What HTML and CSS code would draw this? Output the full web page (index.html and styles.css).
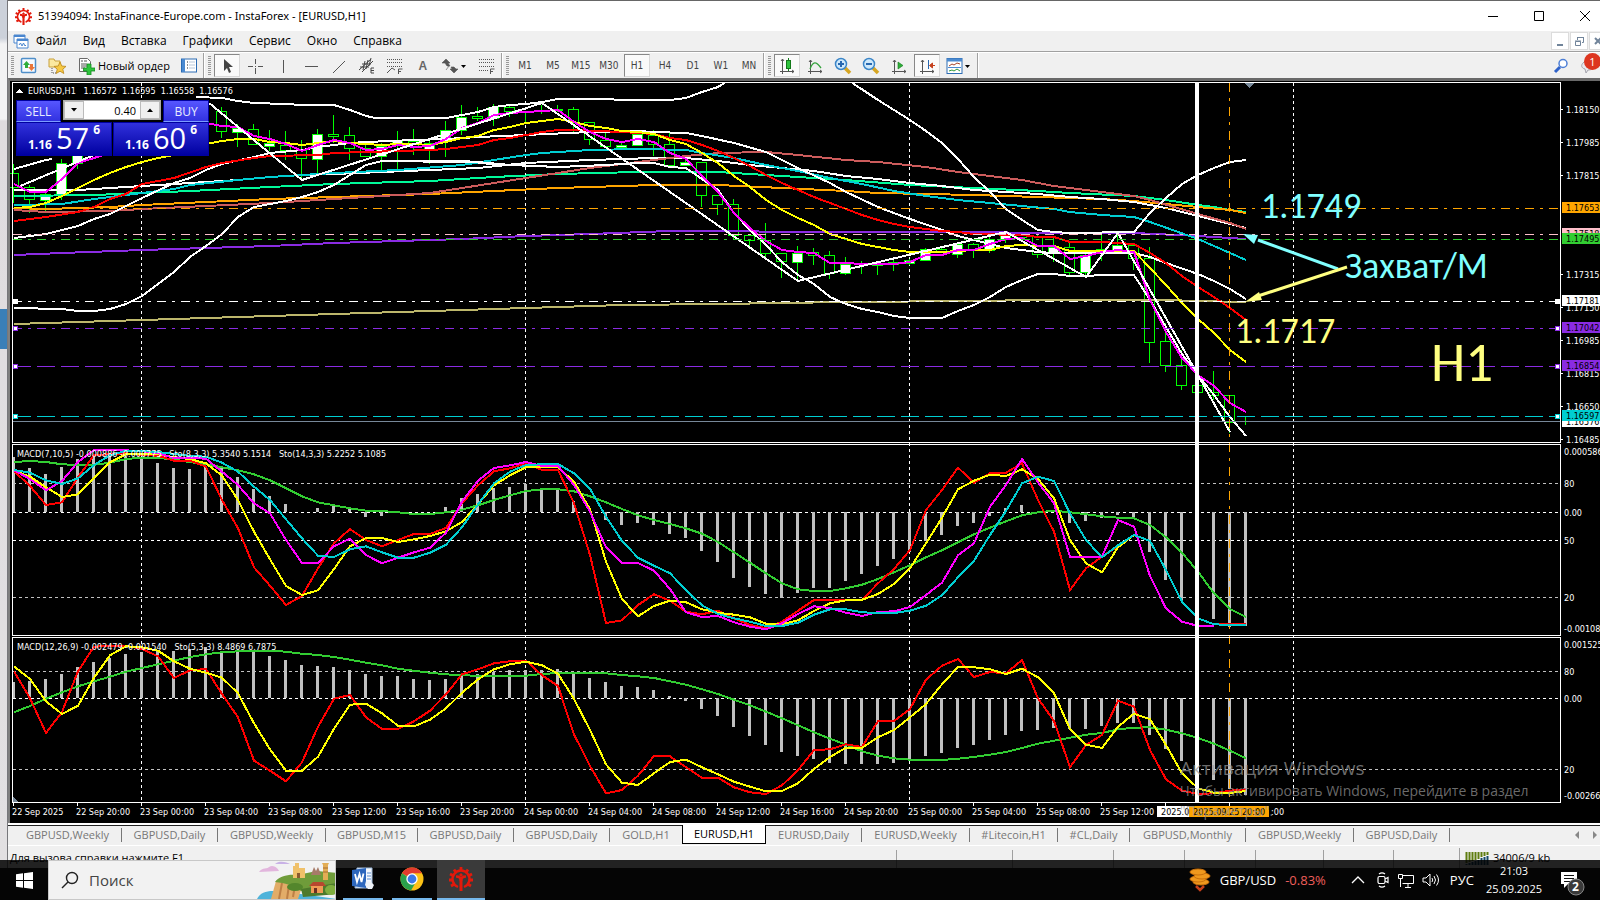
FILE: index.html
```html
<!DOCTYPE html>
<html lang="ru">
<head>
<meta charset="utf-8">
<title>InstaForex - EURUSD,H1</title>
<link rel="stylesheet" href="styles.css">
</head>
<body>
<div class="desktop">
  <div class="behind"><div class="behind-blue"></div></div>
  <main class="app">
    <header class="titlebar">
      <svg class="logo" width="17" height="17" viewBox="0 0 24 24"><use href="#insta"/></svg>
      <h1>51394094: InstaFinance-Europe.com - InstaForex - [EURUSD,H1]</h1>
      <div class="winctl">
        <button aria-label="Свернуть"><svg width="12" height="12"><path d="M1 6.500h10" stroke="#000"/></svg></button>
        <button aria-label="Развернуть"><svg width="12" height="12"><path d="M1.500 1.500h9v9h-9z" stroke="#000" fill="none"/></svg></button>
        <button aria-label="Закрыть"><svg width="12" height="12"><path d="M1 1l10 10M11 1L1 11" stroke="#000"/></svg></button>
      </div>
    </header>
    <nav class="menubar">
      <svg width="16" height="16" viewBox="0 0 16 16"><g fill="#fff" stroke="#4a86cf"><path d="M1 2h11v8H1z"/><path d="M1 3h11" stroke-width="2"/><path d="M4 6h11v9H4z"/><path d="M4 7h11" stroke-width="2"/><path d="M6 12l1.500-2L9 13l1.500-3 1.500 3 1-1" fill="none"/></g></svg>
      <a href="#">Файл</a><a href="#">Вид</a><a href="#">Вставка</a><a href="#">Графики</a><a href="#">Сервис</a><a href="#">Окно</a><a href="#">Справка</a>
      <div class="mdi">
        <button aria-label="Свернуть окно"><svg width="16" height="16"><path d="M5 12h6" stroke="#71849a" stroke-width="2"/></svg></button>
        <button aria-label="Восстановить окно"><svg width="16" height="16" fill="none" stroke="#71849a"><path d="M6.500 7V4.500h6v5H11M6 4.500h7" /><path d="M4.500 8.500h5v4h-5zM4 8h6"/></svg></button>
        <button aria-label="Закрыть окно"><svg width="16" height="16"><path d="M5 5l6 6M11 5l-6 6" stroke="#71849a" stroke-width="2"/></svg></button>
      </div>
    </nav>
    <div class="toolbar">
      <i class="grip"></i>
      <button class="tb first" aria-label="Обзор рынка"><svg width="18" height="18" viewBox="0 0 18 18"><rect x="1.500" y="1.500" width="14" height="14" rx="1" fill="#f5faff" stroke="#4f8fc9" stroke-width="1.500"/><path d="M3 8l3.500-4L10 8H8v3H5V8z" fill="#2fae3b"/><path d="M8 10h2V7h3v3h2l-3.500 4z" fill="#e9763a"/></svg></button>
      <button class="tb" aria-label="Навигатор"><svg width="18" height="18" viewBox="0 0 18 18"><path d="M1 2h5l1 2h5v6H1z" fill="#fbe9a0" stroke="#c9a13c"/><path d="M4 11v5h4" stroke="#555" fill="none" stroke-dasharray="1 1"/><path d="M12 5l1.800 4 4.200.4-3.200 2.800 1 4.300L12 14.200 8.200 16.500l1-4.300L6 9.400l4.200-.4z" fill="#f6c945" stroke="#b98518" stroke-width=".8"/></svg></button>
      <button class="tb order"><svg width="18" height="18" viewBox="0 0 18 18"><path d="M2.500 1.500h8l3 3v10h-11z" fill="#fff" stroke="#6a6a6a"/><path d="M4 4h2M4 7h6M4 9h6M4 11h4M7 4h3" stroke="#555"/><path d="M10 7h4v4h4v3h-4v4h-4v-4H6.500v-3H10z" fill="#2fc33e" stroke="#138a1f" stroke-width=".8"/></svg>Новый ордер</button>
      <button class="tb term" aria-label="Терминал"><svg width="18" height="18" viewBox="0 0 18 18"><rect x="1.500" y="2" width="15" height="13" fill="#fff" stroke="#2c6cb4"/><path d="M2 2h3v13H2z" fill="#4b8ad0"/><path d="M7 5h1M7 8h1M7 11h1" stroke="#222"/><path d="M9 5h6M9 8h6M9 11h6" stroke="#b8c8da"/></svg></button>
      <i class="sep"></i><i class="grip"></i>
      <button class="tb on" aria-label="Курсор"><svg width="18" height="18"><path d="M6 2v12l3-3 2 5 2-1-2-5h4z" fill="#444"/></svg></button>
      <button class="tb" aria-label="Перекрестие"><svg width="18" height="18" stroke="#555"><path d="M9.500 2v5M9.500 11v6M2 9.500h5M12 9.500h5M9 9.500h1"/></svg></button>
      <button class="tb" aria-label="Вертикальная линия"><svg width="18" height="18" stroke="#555"><path d="M9.500 3v13"/></svg></button>
      <button class="tb" aria-label="Горизонтальная линия"><svg width="18" height="18" stroke="#555"><path d="M3 9.500h13"/></svg></button>
      <button class="tb" aria-label="Трендовая линия"><svg width="18" height="18" stroke="#555"><path d="M3 16L15 4"/></svg></button>
      <button class="tb" aria-label="Канал"><svg width="18" height="18" fill="none" stroke="#444"><path d="M1 13L13 2M4 15L15 4M2 10h9M4 7h9M5 13L7 4M8 12l2-9M11 9l2-8"/><path d="M16 11h-3v5h3M13 13.500h3"/></svg></button>
      <button class="tb" aria-label="Фибоначчи"><svg width="18" height="18" fill="none" stroke="#555"><path d="M1 2.500h16M1 5.500h16M1 9.500h16" stroke-dasharray="1 1"/><path d="M1 16l5-5 3 2M12.500 17v-5h4M12 14.500h3"/></svg></button>
      <button class="tb" aria-label="Текст"><b class="glyph">A</b></button>
      <button class="tb drop" aria-label="Стрелки"><svg width="26" height="18" viewBox="0 0 26 18"><path d="M0 6l4-4 4 4H6l2 3H5L3 6zM8 12h2l-1-2h3l2 2h2l-4 4zM7 9l-3 4" fill="#555" stroke="#555" stroke-width=".6"/><path d="M19 8h5l-2.500 3z" fill="#000"/></svg></button>
      <button class="tb" aria-label="Объекты"><svg width="18" height="18" fill="none" stroke="#555"><path d="M1 2.500h15M1 5.500h15M1 9.500h15M1 13.500h9" stroke-dasharray="1 1"/><path d="M12.500 17v-5h4M12 14.500h3"/></svg></button>
      <i class="sep"></i><i class="grip"></i>
      <button class="tb tf">M1</button><button class="tb tf">M5</button><button class="tb tf">M15</button><button class="tb tf">M30</button><button class="tb tf on">H1</button><button class="tb tf">H4</button><button class="tb tf">D1</button><button class="tb tf">W1</button><button class="tb tf">MN</button>
      <i class="sep"></i><i class="grip"></i>
      <button class="tb on" aria-label="Свечи"><svg width="18" height="18"><path d="M4.500 2v15M2 14.500h14M3 4l1.500-2L6 4M14 13l2 1.500-2 1.500" stroke="#555" fill="none"/><path d="M10.500 1v13" stroke="#137a1a"/><rect x="8.500" y="3.500" width="4" height="8" fill="#2fc33e" stroke="#137a1a"/></svg></button>
      <button class="tb" aria-label="Линия"><svg width="18" height="18" fill="none"><path d="M4.500 3v14M2 14.500h14M3 5l1.500-2L6 5M14 13l2 1.500-2 1.500" stroke="#555"/><path d="M4 12c3-8 6-8 11-1" stroke="#33a13b" stroke-width="1.300"/></svg></button>
      <button class="tb" aria-label="Увеличить"><svg width="18" height="18"><path d="M11 11l5 5" stroke="#d6a623" stroke-width="3.500"/><circle cx="7" cy="7" r="5.500" fill="#cfe9fb" stroke="#3c86c8" stroke-width="1.500"/><path d="M4 7h6M7 4v6" stroke="#2868b0" stroke-width="2"/></svg></button>
      <button class="tb" aria-label="Уменьшить"><svg width="18" height="18"><path d="M11 11l5 5" stroke="#d6a623" stroke-width="3.500"/><circle cx="7" cy="7" r="5.500" fill="#cfe9fb" stroke="#3c86c8" stroke-width="1.500"/><path d="M4 7h6" stroke="#2868b0" stroke-width="2"/></svg></button>
      <button class="tb" aria-label="Автопрокрутка"><svg width="18" height="18" fill="none"><path d="M4.500 3v14M2 14.500h14M3 5l1.500-2L6 5M14 13l2 1.500-2 1.500" stroke="#555"/><path d="M8 5v7l5-3.500z" fill="#2fae3b" stroke="#137a1a" stroke-width=".6"/></svg></button>
      <button class="tb on" aria-label="Сдвиг"><svg width="18" height="18" fill="none"><path d="M4.500 3v14M2 14.500h14M3 5l1.500-2L6 5M14 13l2 1.500-2 1.500" stroke="#555"/><path d="M10.500 3v9" stroke="#2868b0"/><path d="M17 8.500h-5M14.500 6l-3 2.500 3 2.500z" fill="#c5401c" stroke="#c5401c"/></svg></button>
      <button class="tb drop" aria-label="Шаблоны"><svg width="26" height="18" viewBox="0 0 26 18"><rect x="1" y="1.500" width="15" height="15" fill="#fff" stroke="#2c6cb4"/><path d="M1 3h15" stroke="#4b8ad0" stroke-width="3"/><path d="M3 9l3-2 2 1 3-2 3 1" stroke="#a5452b" fill="none"/><path d="M2 10.500h13" stroke="#4b8ad0"/><path d="M3 14l3-1 2 1 3-2 3 2" stroke="#2f9a3a" fill="none"/><path d="M19 8h5l-2.500 3z" fill="#000"/></svg></button>
      <i class="sep"></i>
      <div class="tb-right">
        <button class="tb" aria-label="Поиск"><svg width="18" height="18"><path d="M7 10l-5 5" stroke="#2f62c9" stroke-width="3"/><circle cx="10" cy="6.500" r="4" fill="#fff" stroke="#4d7fd6" stroke-width="1.500"/></svg></button>
        <button class="tb chat" aria-label="Сообщения"><svg width="16" height="16"><path d="M3 5c3-4 11-3 12 1s-3 6-7 6l-2 3-1-4C1 10 1 7 3 5z" fill="#e9e9ee" stroke="#a5a5ad"/></svg><span class="badge">1</span></button>
      </div>
    </div>

    <section class="chart">
      <svg id="plot" class="plot" width="100%" height="100%" aria-label="EURUSD,H1"></svg>
      <div class="oneclick">
        <button class="side sell">SELL</button>
        <div class="volume"><button aria-label="Меньше"><svg width="6" height="4"><path d="M0 0h6L3 3.500z"/></svg></button><input aria-label="Объём" value="0.40"><button aria-label="Больше"><svg width="6" height="4"><path d="M0 4h6L3 .5z"/></svg></button></div>
        <button class="side buy">BUY</button>
        <button class="quote"><small>1.16</small><span>57</span><sup>6</sup></button>
        <button class="quote"><small>1.16</small><span>60</span><sup>6</sup></button>
      </div>
      <div class="activation"><p class="act-head">Активация Windows</p><p>Чтобы активировать Windows, перейдите в раздел</p><p>"Параметры".</p></div>
    </section>

    <nav class="tabs">
      <a href="#">GBPUSD,Weekly</a><a href="#">GBPUSD,Daily</a><a href="#">GBPUSD,Weekly</a><a href="#">GBPUSD,M15</a><a href="#">GBPUSD,Daily</a><a href="#">GBPUSD,Daily</a><a href="#" class="plain">GOLD,H1</a><a href="#" class="active">EURUSD,H1</a><a href="#">EURUSD,Daily</a><a href="#">EURUSD,Weekly</a><a href="#">#Litecoin,H1</a><a href="#">#CL,Daily</a><a href="#">GBPUSD,Monthly</a><a href="#">GBPUSD,Weekly</a><a href="#">GBPUSD,Daily</a>
      <div class="tabscroll"><button aria-label="Назад"><svg width="4" height="8"><path d="M4 0v8L0 4z" fill="#888"/></svg></button><button aria-label="Вперёд"><svg width="4" height="8"><path d="M0 0v8l4-4z" fill="#888"/></svg></button></div>
    </nav>
    <div class="statusbar">
      <span class="help">Для вызова справки нажмите F1</span><i></i><i></i><i></i><i></i><i></i><i></i><i></i>
      <span class="traffic"><svg width="24" height="14"><path d="M1.500 1v11M4.500 1v10M7.500 1v9M10.500 1v8M13.500 1v7M16.500 1v5M19.500 1v4M22.500 1v3" stroke="#5f7d10" stroke-width="2"/><path d="M1.500 13v1M4.500 12v2M7.500 11v3M10.500 10v4M13.500 9v5M16.500 7v7M19.500 6v8M22.500 5v9" stroke="#164a68" stroke-width="2"/></svg>34006/9 kb</span>
    </div>
  </main>
  <footer class="taskbar">
    <button class="start" aria-label="Пуск"><svg width="17" height="17" fill="#fff"><path d="M0 2.300l7-1V8H0zM8 1.200L17 0v8H8zM0 9h7v6.700l-7-1zM8 9h9v8l-9-1.200z"/></svg></button>
    <label class="search"><svg width="18" height="18" fill="none" stroke="#222" stroke-width="1.400"><circle cx="11" cy="7" r="5.500"/><path d="M7 11l-6 6"/></svg><input placeholder="Поиск" aria-label="Поиск">
      <svg class="castle" width="78" height="39" viewBox="0 0 78 39"><path d="M2 12c3-5 9-3 10-5 4-3 9 1 10 4z" fill="#e2b6dd"/><path d="M18 4c4-4 12-2 15 0z" fill="#c9b2e6"/><path d="M0 39c4-8 14-9 24-7l20 2 36 5z" fill="#4fb3da"/><path d="M14 39l5-18 8-3 12 0 6 9-4 12z" fill="#e2ac68"/><path d="M22 39l3-16M30 39l2-14M36 37l2-12" stroke="#bd7f45" stroke-width="2"/><path d="M18 22c4-6 14-8 22-7l20-4 20 2v14l-36 4c-8-6-16-8-26-9z" fill="#6f9c3a"/><path d="M44 29l36-6v11l-34 3z" fill="#4d7a2c"/><path d="M36 18V6h2V3h4v5h6v10z" fill="#f0c169"/><path d="M40 18v-5h3v5z" fill="#8a5a30"/><path d="M54 15l3-8 2 4 2-4 3 8z" fill="#a77b68"/><path d="M66 20V5l-1-2h7l-1 2v15z" fill="#e3ad55"/><path d="M66 8h5M66 12h5" stroke="#a86d33"/><path d="M54 25h12v8H54z" fill="#f09a55"/><path d="M52 26l4-4h10l3 4z" fill="#b6482e"/><path d="M57 28h3v5h-3z" fill="#6b2f20"/><ellipse cx="38" cy="27" rx="8" ry="4" fill="#53862c"/><ellipse cx="74" cy="30" rx="6" ry="5" fill="#7fae3e"/></svg></label>
    <button class="task gap" aria-label="Word"><svg width="24" height="24"><path d="M6 1h15v20H4z" fill="#f4f8fd" stroke="#9fbadb"/><path d="M1 3l14-2v20L1 19z" fill="#2d67bd"/><path d="M4 7l2 8 2.500-8 2 8 2-8.500" stroke="#fff" stroke-width="1.800" fill="none"/><path d="M16 6h4M16 9h4M16 12h4" stroke="#5c8ed0"/><path d="M15 14l5 1 3 3-2 4h-4l-3-4z" fill="#eef2f8"/></svg></button>
    <button class="task" aria-label="Chrome"><svg width="24" height="24" viewBox="0 0 24 24"><circle cx="12" cy="12" r="11.500" fill="#fbc116"/><path d="M12 12L2 6.300A11.500 11.500 0 0 1 22 6.300H12z" fill="#e33b2e"/><path d="M2 6.300A11.500 11.500 0 0 0 11 23.500l5-8.700-4-2z" fill="#2aa14c"/><circle cx="12" cy="12" r="5.700" fill="#fff"/><circle cx="12" cy="12" r="4.400" fill="#3b78e7"/></svg></button>
    <button class="task current" aria-label="InstaForex"><svg width="24" height="24" viewBox="0 0 24 24"><g id="insta" fill="none" stroke="#e3190b"><path d="M9 20a8.500 8.500 0 1 1 6 0" stroke-width="2.400"/><path d="M12 0v4M5 2.500l2 3M19 2.500l-2 3M1 7l3 1.500M23 7l-3 1.500M0 13h4M24 13h-4M2 19l3.500-2M22 19l-3.500-2" stroke-width="2.800"/><path d="M12 24V12" stroke-width="3"/><path d="M7 9.500c3 0 5 1.500 5 4.500 0-3 2-4.500 5-4.500" stroke-width="2.600"/><circle cx="12" cy="8" r="1.200" fill="#e3190b"/></g></svg></button>
    <div class="tray">
      <button class="news"><svg width="22" height="24"><g fill="#f0991d" stroke="#c9700c"><ellipse cx="12" cy="14" rx="8" ry="3"/><ellipse cx="9" cy="11" rx="8" ry="3"/><ellipse cx="13" cy="8" rx="8" ry="3"/><ellipse cx="9" cy="4" rx="8" ry="3"/></g><path d="M7 18l4 4 4-4" fill="none" stroke="#c8411a" stroke-width="2.500"/></svg>GBP/USD <em>-0.83%</em></button>
      <button class="chev" aria-label="Скрытые значки"><svg width="14" height="8" fill="none" stroke="#fff" stroke-width="1.300"><path d="M1 7l6-6 6 6"/></svg></button>
      <button aria-label="Камера"><svg width="14" height="16" fill="none" stroke="#fff" stroke-width="1.200"><rect x="2" y="4.500" width="7" height="7" rx="1.500"/><path d="M9 7l3-1.500v5L9 9M3 2c2-1.500 4-1.500 6 0M3 14c2 1.500 4 1.500 6 0"/></svg></button>
      <button aria-label="Сеть"><svg width="18" height="15" fill="none" stroke="#fff"><path d="M5 2.500h11.500v8H5.500M11 11v3M8 14.500h6M1.500 1.500h4v4h-4zM3.500 6v8"/></svg></button>
      <button aria-label="Звук"><svg width="18" height="14" fill="none" stroke="#fff"><path d="M1 5h3l4-4v12L4 9H1z"/><path d="M10 5q1.500 2 0 4M12 3q3 4 0 8M14.500 1.500q4 5.500 0 11"/></svg></button>
      <span class="lang">РУС</span>
      <time class="clock"><span>21:03</span><span>25.09.2025</span></time>
      <button class="notes" aria-label="Уведомления"><svg width="26" height="26"><path d="M2 2h16v12H9l-4 4v-4H2z" fill="#fff"/><path d="M5 5.500h10M5 8.500h10M5 11.500h6" stroke="#111"/><circle cx="17" cy="17" r="8" fill="#3a3a3a" stroke="#888"/></svg><b>2</b></button>
    </div>
  </footer>
</div>
<script src="chart.js"></script>
</body>
</html>
```

FILE: styles.css
```css
* { box-sizing: border-box; }
body { margin: 0; background: #000; font-family: "Open Sans", "Noto Sans", sans-serif; }
button { border: 0; padding: 0; background: none; font: inherit; color: inherit; }
a { color: inherit; text-decoration: none; }
svg { flex: none; }

.desktop { height: 100vh; min-height: 600px; display: grid; grid-template-columns: 8px 1fr; grid-template-rows: 1fr 32px; overflow: hidden; }
.behind { background: linear-gradient(#ccd1da 0, #ccd1da 38px, #f2f2f3 44px, #f2f2f3 119px, #dfdcdf 121px, #e2e0e2); border-right: 1px solid #77777b; padding-top: 309px; }
.behind-blue { height: 40px; background: #3a7fb8; }
.app { display: flex; flex-direction: column; min-width: 0; min-height: 0; background: #f0f0f0; border-top: 1px solid #666; }

.titlebar { height: 30px; flex: none; display: flex; align-items: center; background: #fff; padding-left: 7px; }
.titlebar h1 { margin: 0 0 0 6px; font-size: 11px; font-weight: 400; line-height: 30px; white-space: nowrap; font-family: "Noto Sans", sans-serif; }
.winctl { margin-left: auto; display: flex; padding-right: 8px; gap: 33px; }
.winctl button { width: 13px; height: 12px; display: flex; }

.menubar { height: 21px; flex: none; display: flex; align-items: center; gap: 16px; padding-left: 5px; font-size: 12px; line-height: 18px; border-bottom: 1px solid #a0a0a0; overflow: hidden; white-space: nowrap; }
.menubar > svg + a { margin-left: -9px; }
.mdi { margin-left: auto; display: flex; gap: 1px; margin-right: -7px; }
.mdi button { width: 18px; height: 18px; background: #fff; border: 1px solid #dcdcdc; }
.mdi svg { display: block; }

.toolbar { height: 26px; flex: none; display: flex; align-items: center; background: #f0f0f0; border-top: 1px solid #fff; }
.grip { width: 3px; height: 20px; margin: 0 2px 0 3px; background: repeating-linear-gradient(#999 0 1px, #f0f0f0 1px 2px); }
.sep { width: 2px; height: 26px; background: #a0a0a0; border-right: 1px solid #fff; }
.tb { width: 26px; height: 23px; margin: 0 1px; flex: none; display: inline-flex; align-items: center; justify-content: center; color: #444; }
.tb.on { background: #fafafa; border: 1px solid #d8d8d8; border-top-color: #888; border-left-color: #888; }
.tb.first { margin-left: 0; }
.tb.order { width: auto; margin-left: 6px; gap: 3px; font-size: 11px; color: #000; }
.tb.term { margin: 0 1px 0 5px; }
.tb.drop { width: 34px; }
.tb.tf { font-family: "DejaVu Sans Condensed", "DejaVu Sans", sans-serif; font-stretch: condensed; font-size: 10px; }
.glyph { font: bold 12px "Liberation Sans", sans-serif; color: #666; }
.tb-right { margin-left: auto; display: flex; }
.chat { position: relative; width: 22px; }
.badge { position: absolute; right: -2px; top: -1px; width: 17px; height: 17px; border-radius: 50%; background: #dd3620; color: #fff; font-size: 11px; line-height: 17px; }

.chart { position: relative; flex: 1; min-height: 0; overflow: hidden; background: #000; border-top: 3px solid #696969; border-left: 2px solid #808080; }
.plot { display: block; }
.plot text { font-family: "DejaVu Sans Condensed", "DejaVu Sans", sans-serif; font-stretch: condensed; font-size: 9px; fill: #fff; white-space: pre; }
.plot text.dark { fill: #000; }
.plot text.note { font-family: Carlito, Lato, "Open Sans", sans-serif; font-size: 36px; fill: #80ffff; }
.plot text.warm { fill: #ffff80; }
.plot text.big { font-size: 55px; }

.oneclick { position: absolute; left: 6px; top: 19px; width: 193px; display: grid; grid-template-columns: 45px 1fr 46px; grid-template-rows: 22px 34px; column-gap: 2px; background: #000; color: #e8ecff; }
.side { background: linear-gradient(#5656ff, #3232e0); font-size: 12px; border: 1px solid #0000a0; border-bottom: 1px solid #7c9cff; }
.volume { display: flex; height: 20px; border: 1px solid #aaa; background: #fff; }
.volume button { width: 20px; background: #f0f0f0; border: 1px solid #bbb; display: grid; place-items: center; }
.volume input { width: 10px; flex: 1; border: 0; padding: 0 4px; text-align: right; font: 11px "Open Sans", sans-serif; }
.quote { grid-column: 1 / 4; grid-row: 2; background: linear-gradient(#3131dc, #0000a0); width: 96px; border: 1px solid #0000a0; display: flex; justify-content: center; gap: 4px; line-height: 30px; color: #fff; }
.quote + .quote { margin-left: 97px; }
.quote small { font-size: 12px; font-weight: 700; line-height: 44px; }
.quote span { font-size: 29px; }
.quote sup { font-size: 12px; font-weight: 700; line-height: 14px; }
.activation { position: absolute; left: 1170px; top: 675px; color: rgba(150, 150, 150, .72); white-space: nowrap; font-size: 14px; line-height: 20px; }
.activation p { margin: 0; }
.activation .act-head { font-size: 19px; line-height: 25px; }

.tabs { height: 23px; flex: none; display: grid; grid-template-columns: 114px 96px 108px 92px 96px 96px 72px 84px 96px 108px 88px 72px 116px 108px 96px 1fr; border-top: 2px solid #fff; box-shadow: inset 0 1px #222; border-bottom: 1px solid #fff; color: #777; font-size: 11px; line-height: 17px; }
.tabs a { text-align: center; height: 14px; margin-top: 3px; line-height: 13px; border-right: 1px solid #777; white-space: nowrap; }
.tabs a:first-child { padding-left: 6px; }
.tabs a.plain { border: 0; }
.tabs a.active { height: 19px; margin-top: 0; line-height: 18px; color: #000; background: #fff; border: 1px solid #000; border-top: 0; }
.tabscroll { justify-self: end; display: flex; align-items: center; gap: 14px; padding-right: 3px; }
.tabscroll button { display: flex; }

.statusbar { height: 22px; flex: none; display: grid; grid-template-columns: 888px 116px 101px 71px 71px 68px 70px 66px 1fr; font-size: 11px; line-height: 20px; padding-top: 2px; white-space: nowrap; overflow: hidden; }
.statusbar i { border-left: 1px solid #a0a0a0; margin-top: 2px; }
.help { padding-left: 2px; }
.traffic { border-left: 1px solid #a0a0a0; padding-left: 5px; display: flex; gap: 4px; align-items: center; }

.taskbar { grid-column: 1 / 3; margin-top: -8px; z-index: 1; height: 40px; display: flex; background: linear-gradient(rgba(0, 0, 0, .86) 0 8px, #050505 8px); color: #fff; }
.start { width: 48px; display: grid; place-items: center; }
.search { width: 288px; flex: none; display: flex; align-items: center; gap: 10px; padding-left: 12px; background: #f2f2f2; border: 1px solid #c8c8c8; }
.search input { width: 155px; border: 0; background: none; font: 15px "Open Sans", sans-serif; outline: 0; padding: 0; }
.search input::placeholder { color: #444; opacity: 1; }
.castle { margin-left: auto; align-self: end; }
.task { width: 40px; margin-right: 9px; display: grid; place-items: center; border-bottom: 2px solid #76b9ed; }
.task.gap { margin-left: 7px; }
.task.current { width: 48px; margin-left: -4px; background: #3a3a3a; }
.tray { margin-left: auto; display: flex; align-items: center; font-size: 12px; white-space: nowrap; }
.tray > button { display: flex; align-items: center; margin-right: 7px; }
.tray .news { font-size: 13px; gap: 9px; margin-right: 25px; }
.news em { font-style: normal; color: #ee5f5b; }
.tray .chev { margin-right: 11px; }
.lang { font-size: 13px; margin: 0 12px 0 3px; }
.clock { display: flex; flex-direction: column; align-items: center; line-height: 18px; font-size: 11px; }
.tray .notes { position: relative; margin: 6px 15px 0 17px; }
.notes b { position: absolute; left: 13px; top: 7px; font-size: 12px; line-height: 20px; }
```

FILE: chart.js
```js
// Bar i is centred on x = 14 + 16 * i. Heights are window pixels.
const X = i => 14 + 16 * i;
const out = [];
const C = { mag: '#ff00ff', yel: '#ffff00', red: '#ff0000', cya: '#00ced1', grn: '#32cd32', spr: '#00fa9a', ora: '#ffa500', ind: '#cd5c5c', vio: '#8a2be2', kha: '#bdb76b', whi: '#ffffff', pin: '#ffc0cb', sil: '#c0c0c0', sla: '#778899' };
const RIGHT = 1561;

function hline(y, c, dash, x1 = 13) {
  out.push(`<path d="M${x1} ${y + .5}H${RIGHT}" stroke="${c}" fill="none" stroke-dasharray="${dash || 'none'}"/>`);
}
function vline(x, c, dash, w, y1 = 83, y2 = 802) {
  out.push(`<path d="M${x} ${y1}V${y2}" stroke="${c}" stroke-width="${w}" fill="none" stroke-dasharray="${dash || 'none'}"/>`);
}
// Sparse line: bar, height, bar, height...
function line(c, s) {
  const n = s.trim().split(/\s+/).map(Number), p = [];
  for (let k = 0; k < n.length; k += 2) p.push(X(n[k]) + ',' + n[k + 1]);
  out.push(`<polyline points="${p.join(' ')}" fill="none" stroke="${c}" stroke-width="2"/>`);
}
// Dense line: one value per bar from bar 0, in thirds of a pixel below base.
function dense(c, base, s) {
  const p = s.trim().split(/\s+/).map((v, i) => X(i) + ',' + (base + v / 3).toFixed(1));
  out.push(`<polyline points="${p.join(' ')}" fill="none" stroke="${c}" stroke-width="2"/>`);
}
function hist(base, zero, s) {
  s.trim().split(/\s+/).forEach((v, i) => {
    const a = Math.round(base + Math.min(v, zero) / 3), b = Math.round(base + Math.max(v, zero) / 3);
    if (b > a) out.push(`<rect x="${X(i) - 2}" y="${a}" width="3" height="${b - a}" fill="${C.sil}"/>`);
  });
}
function text(x, y, s, cls = '') { out.push(`<text x="${x}" y="${y}" class="${cls}">${s}</text>`); }

[8, 32, 56, 80].forEach(i => vline(X(i) - .5, C.whi, '3 3', 1));
hline(483, C.sil, '3 3'); hline(512, C.whi, '3 3'); hline(540, C.whi, '3 3'); hline(597, C.sil, '3 3');
hline(671, C.sil, '3 3'); hline(698, C.whi, '3 3'); hline(769, C.sil, '3 3');

// Candles: bar, high, low, body top, body bottom, 1 when rising
`0 164 203 173 187 0|1 185 213 187 199 0|2 190 211 194 200 1|3 159 200 163 194 1|4 150 169 155 163 1|13 107 138 111 131 0|14 124 147 128 132 1|15 124 144 129 144 0|16 130 151 143 146 1|17 131 160 145 150 0|18 140 179 150 158 0|19 129 173 134 159 1|20 115 143 134 136 0|21 127 160 135 148 0|22 144 157 148 156 0|23 143 170 146 156 1|24 131 169 141 145 1|25 129 155 141 146 0|26 141 164 143 150 1|27 121 157 130 141 1|28 105 135 117 130 1|29 107 121 116 118 0|30 104 126 107 118 1|31 105 117 107 111 0|32 111 122 111 112 0|33 105 114 110 111 0|34 105 112 109 110 0|35 107 132 109 122 0|36 122 145 122 139 0|37 133 146 140 146 0|38 143 149 145 147 1|39 132 146 134 145 1|40 130 156 135 144 0|41 133 166 144 165 0|42 160 166 162 165 1|43 162 207 162 195 0|44 195 215 195 204 0|45 199 240 204 235 0|46 235 247 235 240 0|47 223 257 240 253 0|48 253 278 253 261 0|49 246 279 253 262 1|50 248 265 252 255 0|51 251 279 255 273 0|52 257 275 264 273 1|53 261 274 263 264 0|54 261 275 264 265 0|55 259 271 262 264 0|56 259 265 260 263 1|57 248 261 249 260 1|58 247 252 249 251 0|59 242 258 244 254 1|60 243 258 244 249 0|61 235 253 239 250 1|62 232 243 232 239 1|63 234 240 234 237 0|64 233 258 236 254 0|65 237 262 247 253 1|66 241 275 247 272 0|67 253 276 255 272 1|68 233 261 249 252 0|69 235 252 245 251 1|70 244 270 245 258 0|71 247 363 258 342 0|72 323 372 341 365 0|73 350 390 365 385 0|74 385 392 385 392 0|75 371 400 392 395 0|76 395 433 395 422 0|77 417 425 421 421 0`.split('|').forEach(r => {
  const [i, hi, lo, t, b, up] = r.split(' ').map(Number), x = X(i) - .5;
  out.push(`<path d="M${x} ${hi}V${lo}" stroke="#00ff00"/><rect x="${x - 5}" y="${t + .5}" width="10" height="${b - t}" fill="${up ? '#fff' : '#000'}" stroke="#00ff00"/>`);
});

line(C.kha, '0 324 8 320 16 316 24 312 32 308 38 305 44 304 52 302 60 301 64 300 72 300 74 301 77 302');
line(C.spr, '0 196 5 195 8 193 11 191 16 187 20 184 24 182 26 181 30 177 34 174 39 172 44 172 48 176 52 180 56 185 60 188 64 191 66 193 70 196 72 200 74 205 75 207 76 210 77 212');
line(C.ora, '0 208 2 209 6 207 8 205 12 202 16 199 20 197 24 195 26 194 30 191 34 188 40 185 44 185 48 188 52 191 54 193 60 195 64 197 68 199 70 201 74 207 76 210 77 213');
line(C.whi, '0 190 4 190 6 188 8 186 10 184 12 182 14 180 16 177 18 175 20 174 23 172 26 170 29 168 32 163 36 160 40 158 42 158 44 161 46 165 48 168 50 171 52 176 54 179 56 183 58 186 60 190 62 192 64 194 66 197 68 199 70 202 72 208 74 216 76 224 77 228');
line(C.whi, '23 161 28 162 30 164 34 167 37 165 39 163 40 163');
line(C.ind, '0 210 2 212 6 211 8 209 12 206 16 203 20 199 24 195 26 193 28 188 30 183 32 178 34 173 36 168 38 164 40 160 42 156 44 153 47 152 49 155 52 160 54 162 57 167 59 172 61 176 63 180 65 186 67 190 69 194 70 196 71 200 74 214 76 223 77 229');
line(C.vio, '0 255 3 253 8 250 12 248 16 246 20 243 24 241 28 239 32 236 36 234 41 231 52 232 58 232 66 233 70 233 74 236 77 239');
line(C.cya, '0 205 3 204 5 199 8 193 10 189 11 185 14 180 16 177 20 173 24 170 28 165 32 155 33 153 36 150 39 149 42 150 43 153 45 158 47 165 49 171 51 178 53 184 55 191 57 196 59 200 61 203 63 206 65 209 66 212 68 215 70 217 71 222 74 239 75 246 76 253 77 260');
line(C.whi, '0 238 1 236 2 234 3 230 4 226 5 219 6 214 7 206 8 198 10 183 11 178 12 170 13 164 15 157 16 153 18 150 19 147 21 143 22 142 25 140 27 139 29 137 32 135 36 132 39 131 40 132 42 133 43 136 45 143 47 152 49 168 51 183 52 192 54 207 56 219 58 230 59 236 60 240 61 244 62 248 63 250 64 252 65 253 70 253 71 257 72 263 74 274 75 281 76 289 77 299');
line(C.whi, '0 169 2 160 2.4 159');
line(C.whi, '11.4 97 13 98 14 101 15 103 17 104 18 105 20 105 21 110 22 116 22.6 118 27 118 28 115 29 112 30 107 31 105 32 104 33 102 34 99 37 99 38 100 41 100 42 98 43 92 44 87 44.4 83');
line(C.whi, '52.4 83 54 100 55 110 56 120 57 131 58 143 59 159 60 177 61 192 62 209 63 220 64 230 65 232 66 233 67 233 69 232 70 232 71 213 72 198 73 184 74 175 75 168 76 162 77 160');
line(C.whi, '0 308 1 308 2 309 3 309 4 311 5 311 6 309 7 304 8 296 9 284 10 272 11 257 12 246 13 234 14 217 15 207 16 204 17 201 18 197 19 192 20 185 21 175 22 165 23 161 24 161 28 161 29 162 31 165 34 167 37 165 39 163 40 163 41 167 42 168 43 179 44 190 45 213 46 230 47 245 48 262 49 275 50 284 51 297 52 304 53 309 54 312 55 316 56 318 58 318 59 311 60 305 61 297 62 287 63 280 64 274 65 274 66 276 67 276 68 275 70 275 71 300 72 327 73 354 74 375 75 395 76 417 77 436');
line(C.red, '0 221 2 217 4 212 5 207 6 199 7 194 8 184 10 178 12 167 13 163 15 158 16 156 19 155 20 153 24 151 26 150 27 149 28 147 29 145 30 140 31 138 32 135 33 132 34 130 35 130 38 132 40 134 41 138 42 140 43 145 44 151 45 158 46 166 47 175 48 183 49 190 50 197 51 203 52 209 53 215 54 220 55 224 56 227 57 229 58 231 59 232 60 234 63 235 64 237 65 237 66 242 68 242 69 243 70 244 71 253 72 263 73 276 74 287 75 297 76 308 77 320');
line(C.yel, '0 208 1 207 2 203 3 196 4 188 5 180 6 173 7 167 8 162 9 158 10 155 12 144 13 141 14 139 15 139 16 142 17 143 18 145 19 143 20 141 21 143 22 144 23 145 24 144 25 144 26 145 27 142 28 138 29 136 30 130 31 127 32 123 33 121 34 119 35 122 36 126 37 128 38 131 39 132 40 134 41 140 42 144 43 153 44 163 45 176 46 187 47 200 48 210 49 218 50 225 51 234 52 239 53 244 54 247 55 250 56 252 58 252 59 251 60 250 61 250 62 246 63 245 64 246 65 246 66 251 70 251 71 268 72 285 73 303 74 319 75 333 76 350 77 362');
line(C.mag, '0 184 1 192 2 192 3 179 4 163 5 158 12 123 13 126 14 127 15 136 16 139 17 144 18 151 19 145 20 140 21 143 22 150 23 149 24 145 25 147 26 146 27 139 28 128 29 123 30 115 31 113 32 112 33 111 34 110 35 122 36 132 37 139 38 142 39 139 40 142 41 153 42 159 43 176 44 192 45 213 46 228 47 241 48 250 49 252 50 253 51 263 52 263 53 264 55 264 56 262 57 255 58 255 59 250 60 250 61 244 62 239 63 238 64 246 65 246 66 259 67 256 68 252 69 250 70 252 71 300 72 332 73 358 74 375 75 386 76 403 77 412');
line(C.whi, '0.4 186 5 155');
line(C.whi, '12.2 103 18 180 33 103 49 281 62 232 67 277 69 233 76 432');

const dd = '9 6 3 6';
hline(208, C.ora, dd); hline(234, C.pin, dd); hline(239, C.grn, dd); hline(301, C.whi, dd);
hline(328, C.vio, dd); hline(366, C.vio, '18 6'); hline(416, C.cya, '18 6'); hline(421, C.sla);
[[301, C.whi], [328, C.vio], [366, C.vio], [416, C.cya]].forEach(([y, c]) => [15, 1557].forEach(x =>
  out.push(`<rect x="${x - 2}" y="${y - 2}" width="5" height="5" fill="${c}"/><rect x="${x - 1}" y="${y - 1}" width="3" height="3" fill="#fff"/>`)));

hist(440, 217, '52 85 102 80 57 52 48 50 57 69 84 87 80 85 110 147 167 192 217 204 196 208 231 228 217 217 217 201 174 162 145 141 133 150 150 183 217 240 255 249 255 282 294 333 366 414 441 462 474 459 444 444 423 402 378 357 336 303 285 258 249 228 204 195 217 217 249 243 234 224 234 336 420 483 500 537 560 557');
dense(C.grn, 440, '66 63 66 73 75 74 68 57 53 53 59 66 73 82 91 103 121 145 169 187 196 205 212 213 217 222 222 217 209 196 180 166 153 148 148 154 169 187 207 226 240 252 265 281 306 337 368 400 430 448 453 453 445 434 417 397 376 352 331 307 283 263 244 226 217 212 217 223 229 233 235 255 292 338 395 460 507 531');
dense(C.red, 440, '93 138 195 187 112 45 43 40 45 47 62 62 80 180 265 382 437 495 468 385 310 267 300 319 300 282 282 264 190 136 94 85 70 90 90 190 345 549 541 495 463 482 515 523 512 535 555 564 545 512 480 480 480 480 430 387 330 210 150 83 128 100 98 70 180 275 450 385 350 318 285 303 390 485 535 553 551 551');
dense(C.yel, 440, '92 110 142 171 163 113 67 43 42 43 52 57 70 107 180 275 358 438 465 451 387 319 294 294 306 298 288 274 246 193 136 106 82 82 82 125 208 365 477 529 498 482 487 508 518 524 532 551 553 541 513 490 481 479 462 432 385 310 233 148 122 104 108 88 117 175 300 370 397 322 285 303 390');
dense(C.mag, 440, '91 117 151 123 66 30 30 31 34 40 54 54 56 95 135 190 220 300 369 369 319 296 345 370 353 337 323 278 185 122 84 76 66 78 78 135 215 322 369 369 392 447 517 531 528 547 560 568 550 522 499 504 518 528 516 514 501 465 428 346 310 200 135 57 127 190 350 350 350 240 260 408 505 545 558 558');
dense(C.cya, 440, '90 98 121 132 115 75 46 32 33 36 42 48 50 68 95 140 180 238 295 347 351 328 319 337 353 353 338 314 262 193 130 95 75 73 72 100 146 230 303 353 377 400 450 496 522 535 545 558 558 548 524 508 508 517 519 519 512 497 466 412 362 285 213 130 110 123 220 300 352 316 285 303 390 485 535 553 555 555');

hist(630, 205, '157 152 147 132 111 96 84 72 66 63 63 57 52 66 66 66 78 90 105 108 111 120 132 138 138 147 150 147 135 132 126 120 120 120 117 132 144 156 168 171 180 198 212 237 258 291 318 345 366 378 387 399 402 402 402 399 387 378 369 354 345 330 315 303 300 294 297 297 288 279 279 315 357 393 420 450 476 495');
dense(C.grn, 630, '247 228 206 187 169 154 140 125 114 103 92 81 73 67 64 62 62 65 71 75 81 89 98 106 116 122 128 133 136 137 138 138 137 132 129 129 129 130 135 139 144 154 164 178 192 209 226 245 265 286 307 326 344 364 377 385 389 390 390 386 381 374 366 354 341 332 323 314 309 298 293 292 299 310 324 341 362 385');
dense(C.red, 630, '124 205 309 246 124 50 48 47 57 79 144 121 117 192 262 392 422 454 397 290 206 195 262 297 297 274 242 193 133 118 100 94 92 136 168 313 408 490 480 437 378 379 412 443 443 472 487 492 466 421 360 358 343 351 273 273 237 149 107 87 141 126 130 90 205 273 412 345 315 212 230 360 448 482 492 490 482 478');
dense(C.yel, 630, '109 147 214 252 227 143 76 49 52 62 94 116 128 143 190 280 358 422 422 380 296 224 221 250 287 289 269 235 188 148 118 103 95 106 131 207 300 403 458 465 430 396 389 412 433 455 470 484 483 460 417 381 353 353 322 300 262 222 163 111 112 118 132 116 142 190 298 344 354 290 251 268 345 430 475 488 489 483');

vline(1197, C.whi, '', 4);
vline(1229.5, C.ora, dd, 1);
out.push('<path d="M1244 83h11l-5.500 5z" fill="#778899"/><path d="M13 797v5h5z" fill="#778899"/>');

// Pane frames
[[82, 442], [444, 635], [637, 802]].forEach(([a, b]) => out.push(`<rect x="12.500" y="${a + .5}" width="1548" height="${b - a}" fill="none" stroke="#fff"/>`));

// Arrows to the two capture levels
out.push('<g shape-rendering="auto"><path d="M1338 269L1258 240" stroke="#80ffff" stroke-width="3"/><path d="M1243 234l15 1-4 9z" fill="#80ffff"/><path d="M1347 267L1258 296" stroke="#ffff80" stroke-width="3"/><path d="M1245 302l14-10 3 8z" fill="#ffff80"/></g>');
text(1261, 218, '1.1749', 'note'); text(1345, 278, 'Захват/М', 'note');
text(1235, 343, '1.1717', 'note warm'); text(1431, 381, 'H1', 'note warm big');

// Price axis
[['1.18150', 109], ['1.17985', 142], ['1.17815', 175], ['1.17315', 274], ['1.17150', 307], ['1.16985', 340], ['1.16815', 373], ['1.16650', 406], ['1.16485', 439]].forEach(([s, y]) => {
  out.push(`<path d="M1561 ${y + .5}h2" stroke="#fff"/>`); text(1566, y + 4, s);
});
[['1.17653', 207, C.ora], ['1.17518', 233, C.pin], ['1.17495', 238, C.grn], ['1.17181', 300, C.whi], ['1.17042', 327, C.vio], ['1.16854', 365, C.vio], ['1.16576', 421, C.whi], ['1.16597', 415, C.cya]].forEach(([s, y, c]) => {
  out.push(`<rect x="1562" y="${y - 5}" width="60" height="11" fill="${c}"/>`); text(1566, y + 4, s, 'dark');
});
[['0.000586', 451], ['80', 483], ['0.00', 512], ['50', 540], ['20', 597], ['-0.001083', 628], ['0.001525', 644], ['80', 671], ['0.00', 698], ['20', 769], ['-0.002661', 795]].forEach(([s, y]) => text(1564, y + 4, s));

text(28, 94, 'EURUSD,H1   1.16572  1.16595  1.16558  1.16576');
out.push('<path d="M16 93h7l-3.500-4z" fill="#fff"/>');
text(17, 457, 'MACD(7,10,5) -0.000886 -0.000775   Sto(8,3,3) 5.3540 5.1514   Sto(14,3,3) 5.2252 5.1085');
text(17, 650, 'MACD(12,26,9) -0.002479 -0.001540   Sto(5,3,3) 8.4869 6.7875');

// Time axis
const hours = ['00:00', '04:00', '08:00', '12:00', '16:00', '20:00'];
for (let k = 0; k <= 17; k++) {
  const h = k + 4, label = k ? `${22 + Math.floor(h / 6)} Sep ${hours[h % 6]}` : '22 Sep 2025';
  text(X(4 * k) - 2, 815, label);
}
for (let k = 0; k <= 19; k++) out.push(`<path d="M${X(4 * k) - .5} 803v3" stroke="#fff"/>`);
text(1271, 815, ':00');
out.push(`<rect x="1157" y="806" width="34" height="11" fill="#fff"/><rect x="1189" y="806" width="80" height="11" fill="${C.ora}"/>`);
text(1161, 815, '2025.0', 'dark'); text(1193, 815, '2025.09.25 20:00', 'dark');

document.getElementById('plot').innerHTML = `<g transform="translate(-10,-81)" shape-rendering="crispEdges">${out.join('')}</g>`;
```
